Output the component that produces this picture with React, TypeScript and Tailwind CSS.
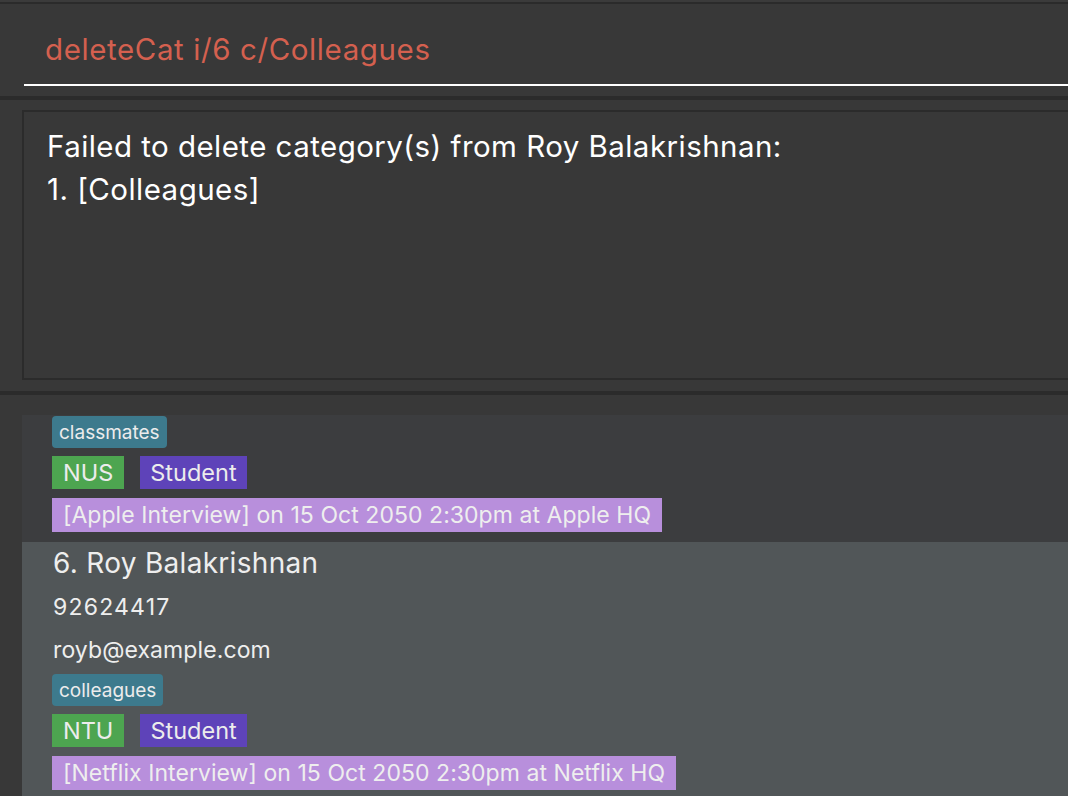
import React from "react";

const font = { fontFamily: "Inter, 'Noto Sans', 'Liberation Sans', sans-serif" };

function Tags({ cat, org, role, event }: { cat: string; org: string; role: string; event: string }) {
  return (
    <div className="flex flex-col items-start">
      <div className="h-[32px] px-[7px] rounded-[4px] bg-[#3d7a8d] text-[#ececec] text-[19px] flex items-center leading-none">
        {cat}
      </div>
      <div className="mt-[8px] flex gap-[16px]">
        <div className="h-[33px] px-[11px] bg-[#4da550] text-[#ececec] text-[23.5px] flex items-center leading-none">
          {org}
        </div>
        <div className="h-[33px] px-[10px] bg-[#5e43b9] text-[#ececec] text-[23.5px] flex items-center leading-none">
          {role}
        </div>
      </div>
      <div className="mt-[9px] h-[34px] px-[11px] bg-[#b88fdc] text-[#eeeeee] text-[23px] flex items-center leading-none tracking-[0.05px]">
        {event}
      </div>
    </div>
  );
}

export default function App() {
  return (
    <div className="w-[1068px] h-[796px] overflow-hidden bg-[#383838] flex flex-col" style={font}>
      <div className="h-[2px] bg-[#3b3b3b] shrink-0" />
      <div className="h-[2px] bg-[#2b2b2b] shrink-0" />
      {/* command box */}
      <div className="h-[92px] shrink-0 pl-[24px] flex flex-col">
        <div className="h-[80px] flex items-center pl-[21px] pt-[12px]">
          <span className="text-[#d4604f] text-[29.5px] leading-none tracking-[0.6px]">deleteCat i/6 c/Colleagues</span>
        </div>
        <div className="h-[2px] bg-white" />
      </div>
      <div className="h-[4px] bg-[#2b2b2b] shrink-0" />
      {/* result box */}
      <div className="h-[291px] shrink-0 pl-[22px] pt-[10px]">
        <div className="h-[270px] border-l-2 border-t-2 border-b-2 border-[#2b2b2b] pl-[23px] pt-[13px] text-white text-[29.5px] leading-[43px] tracking-[0.45px]">
          <div>Failed to delete category(s) from Roy Balakrishnan:</div>
          <div>1. [Colleagues]</div>
        </div>
      </div>
      <div className="h-[4px] bg-[#2b2b2b] shrink-0" />
      {/* list */}
      <div className="flex-1 pl-[22px] pt-[20px] flex flex-col overflow-hidden">
        <div className="h-[127px] shrink-0 bg-[#3c3d3f] pl-[30px] pt-[1px]">
          <Tags cat="classmates" org="NUS" role="Student" event="[Apple Interview] on 15 Oct 2050 2:30pm at Apple HQ" />
        </div>
        <div className="flex-1 bg-[#515658] pl-[31px] pt-[5px] text-[#eeeeee]">
          <div className="text-[28px] leading-[32px] tracking-[0.3px]">6. Roy Balakrishnan</div>
          <div className="mt-[16px] text-[23px] leading-[24px] tracking-[1.2px]">92624417</div>
          <div className="mt-[19px] text-[23px] leading-[24px] tracking-[0.1px]">royb@example.com</div>
          <div className="mt-[12px] -ml-[1px]">
            <Tags cat="colleagues" org="NTU" role="Student" event="[Netflix Interview] on 15 Oct 2050 2:30pm at Netflix HQ" />
          </div>
        </div>
      </div>
    </div>
  );
}
